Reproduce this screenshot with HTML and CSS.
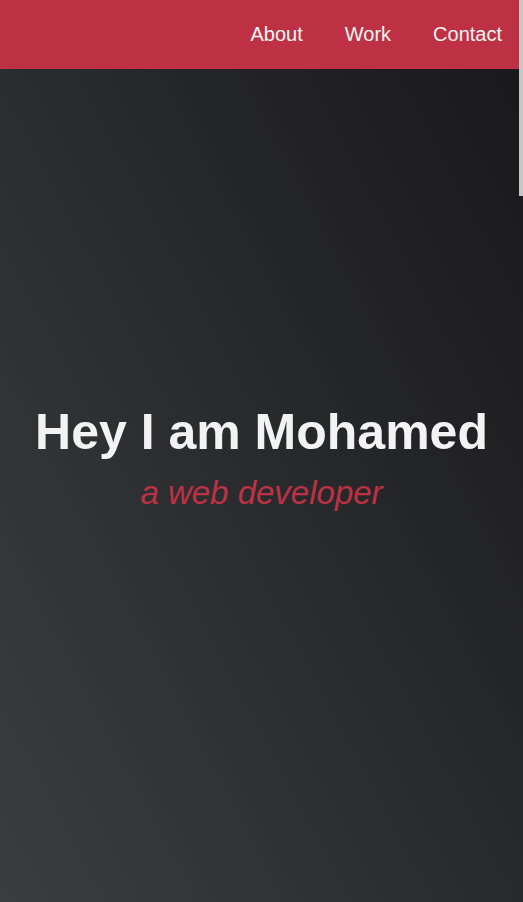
FILE: index.html
```html
<!DOCTYPE html>
<html lang="en">
<head>
<meta charset="utf-8">
<title>Mohamed</title>
<link rel="stylesheet" href="styles.css">
</head>
<body>
<nav class="nav">
  <ul class="nav-list">
    <li><a class="nav-link" href="#welcome">About</a></li>
    <li><a class="nav-link" href="#projects">Work</a></li>
    <li><a class="nav-link" href="#contact">Contact</a></li>
  </ul>
</nav>
<div class="scroll-thumb" aria-hidden="true"></div>
<section class="welcome" id="welcome">
  <h1 class="welcome-title">Hey I am Mohamed</h1>
  <p class="welcome-sub">a web developer</p>
</section>
<section class="projects" id="projects"></section>
<section class="contact" id="contact"></section>
</body>
</html>
```
FILE: styles.css
```css
html {
  background: #1e1f21;
  scrollbar-width: none;
}
::-webkit-scrollbar {
  display: none;
}
body {
  margin: 0;
  font-family: "Liberation Sans", Arial, sans-serif;
  color: #f3f3f3;
}
.scroll-thumb {
  position: fixed;
  top: 0;
  right: 0;
  width: 4px;
  height: 196px;
  background: #c6c6c6;
  z-index: 20;
}
.nav {
  position: fixed;
  top: 0;
  left: 0;
  width: 100%;
  background: #be3144;
  display: flex;
  justify-content: flex-end;
  z-index: 10;
}
.nav-list {
  list-style: none;
  margin: 0;
  padding: 0;
  display: flex;
}
.nav-link {
  display: block;
  padding: 23px 21px;
  font-size: 20px;
  line-height: 23px;
  color: #f3f3f3;
  text-decoration: none;
}
.welcome {
  height: 100vh;
  box-sizing: border-box;
  padding-top: 13px;
  display: flex;
  flex-direction: column;
  justify-content: center;
  align-items: center;
  background-color: #000;
  background-image: linear-gradient(62deg, #3a3d40 0%, #181719 100%);
}
.welcome-title {
  margin: 0;
  font-size: 50px;
  font-weight: 700;
  color: #f3f3f3;
}
.welcome-sub {
  margin: 13px 0 0;
  font-size: 33px;
  font-style: italic;
  color: #be3144;
}
.projects {
  height: 2346px;
  background: #45567d;
}
.contact {
  height: 902px;
  background: #303841;
}
```
